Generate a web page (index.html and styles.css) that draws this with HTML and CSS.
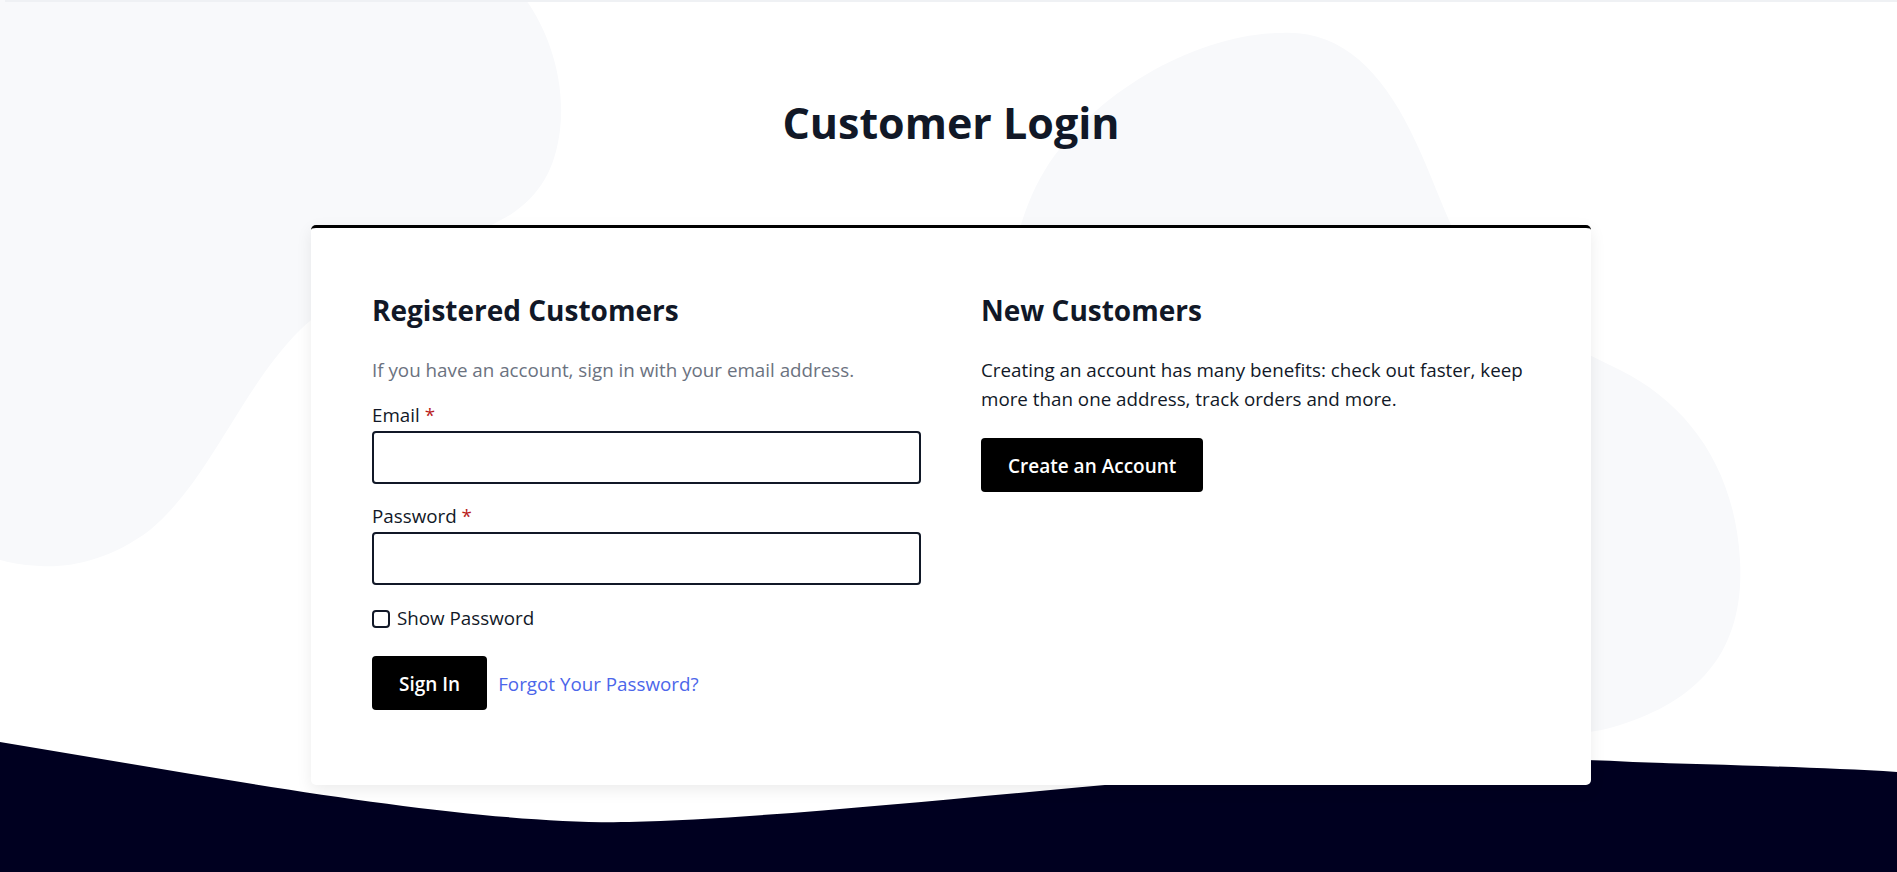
FILE: index.html
```html
<!DOCTYPE html>
<html lang="en">

<head>
    <meta charset="UTF-8" />
    <meta name="viewport" content="width=device-width, initial-scale=1.0" />
    <title>Customer Login</title>
    <link rel="stylesheet" href="styles.css">
</head>

<body>
    <div class="top-line"></div>

    <!-- background shapes -->
    <svg class="page-bg" viewBox="0 0 1897 872" preserveAspectRatio="none" aria-hidden="true">
        <path class="blob" d="M0,0 H526 C548,30 566,80 560,130 C555,170 540,195 510,215 C430,260 340,290 300,330 C240,390 210,480 150,530 C110,560 70,568 40,566 C20,565 8,562 0,560 Z" />
        <path class="blob" d="M1282,33 C1340,30 1380,70 1410,130 C1440,190 1450,240 1490,290 C1530,330 1580,350 1620,370 C1690,405 1735,470 1740,560 C1745,650 1700,700 1620,725 C1590,735 1560,735 1540,730 L1000,420 C1000,320 1008,230 1045,170 C1095,90 1200,33 1282,33 Z" />
        <path class="wave" d="M0,742 C230,780 470,825 629,822 C900,815 1350,745 1633,762 C1720,765 1820,767 1897,772 L1897,872 L0,872 Z" />
    </svg>

    <main class="login-page">
        <h1 class="page-title">Customer Login</h1>

        <div class="login-card">
            <!-- Registered -->
            <section class="login-block">
                <h2>Registered Customers</h2>
                <p class="block-note">If you have an account, sign in with your email address.</p>

                <form class="login-form" onsubmit="return false">
                    <div class="field">
                        <label for="email">Email <span class="required">*</span></label>
                        <input type="email" id="email" />
                    </div>
                    <div class="field">
                        <label for="password">Password <span class="required">*</span></label>
                        <input type="password" id="password" />
                    </div>
                    <label class="show-pass">
                        <input type="checkbox" id="showPassword" onchange="togglePassword()" />
                        Show Password
                    </label>
                    <div class="actions">
                        <button type="submit" class="btn">Sign In</button>
                        <a href="#" class="forgot-link">Forgot Your Password?</a>
                    </div>
                </form>
            </section>

            <!-- New -->
            <section class="login-block">
                <h2>New Customers</h2>
                <p>Creating an account has many benefits: check out faster, keep more than one address, track orders and more.</p>
                <div class="block-actions">
                    <a href="#" class="btn">Create an Account</a>
                </div>
            </section>
        </div>
    </main>

    <script>
        function togglePassword() {
            const input = document.getElementById("password");
            input.type = document.getElementById("showPassword").checked ? "text" : "password";
        }
    </script>
</body>

</html>
```

FILE: styles.css
```css
* {
    box-sizing: border-box;
    margin: 0;
    padding: 0;
}

body {
    font-family: 'Open Sans', sans-serif;
    font-size: 18.8px;
    color: #111827;
    background: #fff;
    min-height: 100vh;
    position: relative;
    overflow: hidden;
    padding-left: 5px;
}

.top-line {
    height: 2px;
    background: #eff1f4;
    position: relative;
    z-index: 1;
}

.page-bg {
    position: absolute;
    top: 0;
    left: 0;
    width: 100%;
    height: 100%;
    z-index: 0;
}

.blob {
    fill: #f8f9fb;
}

.wave {
    fill: #000020;
}

.login-page {
    position: relative;
    z-index: 1;
    max-width: 1280px;
    margin: 0 auto;
    padding-top: 93px;
}

.page-title {
    font-size: 43px;
    font-weight: 700;
    line-height: 56px;
    text-align: center;
    color: #111827;
}

.login-card {
    margin-top: 74px;
    background: #fff;
    border-top: 3px solid #000;
    border-radius: 5px;
    box-shadow: 0 5px 16px rgba(0, 0, 0, 0.08);
    padding: 64px 61px 75px;
    display: grid;
    grid-template-columns: 1fr 1fr;
    column-gap: 60px;
}

.login-block h2 {
    font-size: 28px;
    font-weight: 700;
    line-height: 36px;
    margin-bottom: 28px;
}

.login-block p {
    line-height: 29px;
}

.block-note {
    color: #6b7280;
    margin-bottom: 16px;
}

.field {
    margin-bottom: 18px;
}

.field label {
    display: block;
    line-height: 27px;
    padding-top: 1px;
    margin-bottom: 2px;
}

.required {
    color: #b91c1c;
}

.field input {
    display: block;
    width: 100%;
    height: 53px;
    border: 2px solid #111827;
    border-radius: 4px;
    padding: 0 14px;
    font-family: inherit;
    font-size: 18px;
    outline: none;
}

.show-pass {
    display: flex;
    align-items: center;
    line-height: 27px;
    padding-top: 2px;
}

.show-pass input {
    appearance: none;
    width: 18px;
    height: 18px;
    border: 2px solid #111827;
    border-radius: 4px;
    margin-right: 7px;
    background: #fff;
}

.show-pass input:checked {
    background: #111827;
}

.actions {
    display: flex;
    align-items: center;
    gap: 11px;
    margin-top: 24px;
}

.btn {
    display: inline-block;
    background: #000;
    color: #fff;
    border: none;
    border-radius: 4px;
    padding: 14px 27px 12px;
    font-family: inherit;
    font-size: 19px;
    font-weight: 600;
    line-height: 28px;
    text-decoration: none;
    cursor: pointer;
}

.forgot-link {
    color: #4c66ea;
    text-decoration: none;
    line-height: 27px;
    padding-top: 2px;
}

.block-actions {
    margin-top: 24px;
}
```
